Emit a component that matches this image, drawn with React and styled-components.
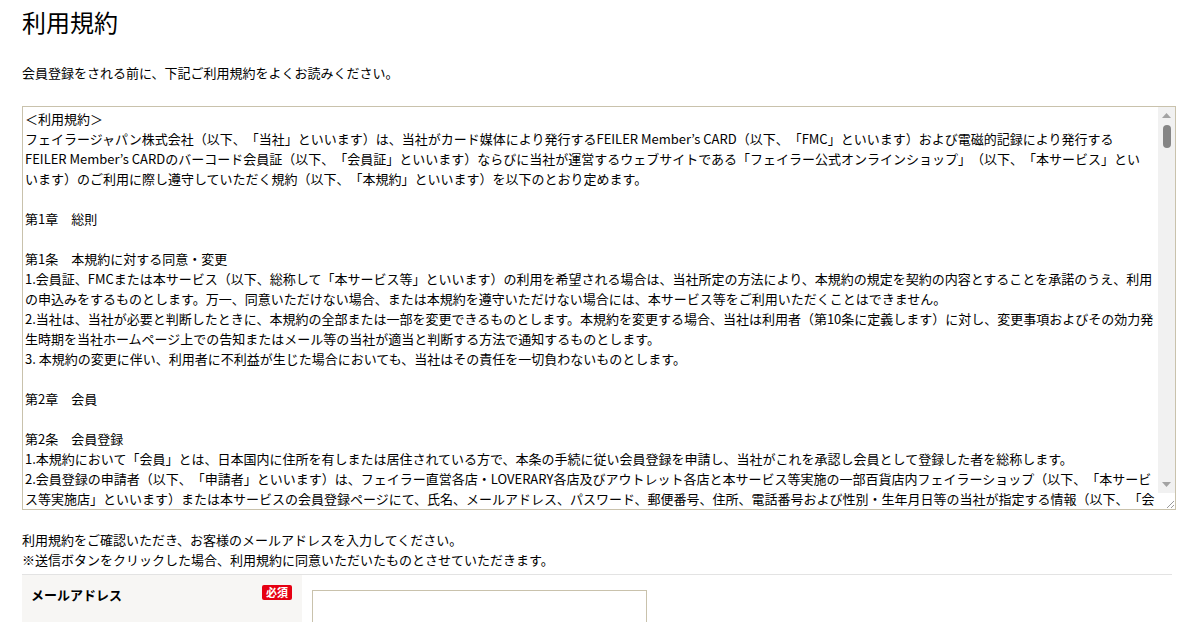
import React from 'react'
import styled, { createGlobalStyle } from 'styled-components'

const GlobalStyle = createGlobalStyle`
  body {
    margin: 0;
    background: #fff;
    color: #000;
    font-family: "Noto Sans CJK JP", "Noto Sans", sans-serif;
    text-spacing-trim: space-all;
  }
`

const Page = styled.div`
  padding: 0 13px 0 22px;
`

const Title = styled.h1`
  margin: 0;
  font-size: 24px;
  font-weight: normal;
  line-height: 44px;
`

const Lead = styled.p`
  margin: 19px 0 23px;
  font-size: 13px;
  line-height: 20px;
`

// textarea と自前のスクロールバーを並べる枠
const TermsFrame = styled.div`
  display: flex;
  box-sizing: border-box;
  height: 404px;
  border: 1px solid #c9c2ac;
  background: #fff;
`

const TermsBox = styled.textarea`
  flex: 1;
  display: block;
  margin: 0;
  padding: 2px 2px;
  border: none;
  background: #fff;
  color: #000;
  font-family: "Noto Sans CJK JP", "Noto Sans", sans-serif;
  font-size: 13px;
  line-height: 20px;
  text-spacing-trim: space-all;
  resize: none;
  outline: none;
  overflow: hidden;
`

const ScrollRail = styled.div`
  display: flex;
  flex-direction: column;
  width: 17px;
  background: #f1f1f1;
`

const RailButton = styled.div`
  display: flex;
  align-items: center;
  justify-content: center;
  height: 17px;
  color: #a3a3a3;
`

const RailTrack = styled.div`
  flex: 1;
  display: flex;
  justify-content: center;
  padding-top: 1px;
`

const RailThumb = styled.div`
  width: 8px;
  height: 23px;
  border-radius: 4px;
  background: #858585;
`

const Resizer = styled.div`
  display: flex;
  align-items: flex-end;
  justify-content: flex-end;
  height: 16px;
  background: #fff;
`

const Note = styled.p`
  margin: 20px 0 0;
  font-size: 13px;
  line-height: 20px;
`

const FormTable = styled.div`
  margin-top: 4px;
  border-top: 1px solid #e3e3e3;
  width: 1150px;
`

const FormRow = styled.div`
  display: grid;
  grid-template-columns: 280px 1fr;
`

const LabelCell = styled.div`
  display: flex;
  justify-content: space-between;
  align-items: flex-start;
  padding: 10px 10px 20px 9px;
  background: #f7f6f4;
`

const LabelText = styled.span`
  font-size: 13px;
  font-weight: bold;
  line-height: 20px;
`

const Required = styled.span`
  padding: 0 4px;
  border-radius: 2px;
  background: #e60012;
  color: #fff;
  font-size: 11px;
  font-weight: bold;
  line-height: 15px;
`

const InputCell = styled.div`
  padding: 15px 10px;
`

const TextInput = styled.input`
  display: block;
  box-sizing: border-box;
  width: 335px;
  height: 36px;
  padding: 4px 6px;
  border: 1px solid #c9c2ac;
  font-size: 13px;
  font-family: "Noto Sans CJK JP", "Noto Sans", sans-serif;
  outline: none;
`

const terms = `＜利用規約＞
フェイラージャパン株式会社（以下、「当社」といいます）は、当社がカード媒体により発行するFEILER Member’s CARD（以下、「FMC」といいます）および電磁的記録により発行する
FEILER Member’s CARDのバーコード会員証（以下、「会員証」といいます）ならびに当社が運営するウェブサイトである「フェイラー公式オンラインショップ」（以下、「本サービス」とい
います）のご利用に際し遵守していただく規約（以下、「本規約」といいます）を以下のとおり定めます。

第1章　総則

第1条　本規約に対する同意・変更
1.会員証、FMCまたは本サービス（以下、総称して「本サービス等」といいます）の利用を希望される場合は、当社所定の方法により、本規約の規定を契約の内容とすることを承諾のうえ、利用
の申込みをするものとします。万一、同意いただけない場合、または本規約を遵守いただけない場合には、本サービス等をご利用いただくことはできません。
2.当社は、当社が必要と判断したときに、本規約の全部または一部を変更できるものとします。本規約を変更する場合、当社は利用者（第10条に定義します）に対し、変更事項およびその効力発
生時期を当社ホームページ上での告知またはメール等の当社が適当と判断する方法で通知するものとします。
3. 本規約の変更に伴い、利用者に不利益が生じた場合においても、当社はその責任を一切負わないものとします。

第2章　会員

第2条　会員登録
1.本規約において「会員」とは、日本国内に住所を有しまたは居住されている方で、本条の手続に従い会員登録を申請し、当社がこれを承認し会員として登録した者を総称します。
2.会員登録の申請者（以下、「申請者」といいます）は、フェイラー直営各店・LOVERARY各店及びアウトレット各店と本サービス等実施の一部百貨店内フェイラーショップ（以下、「本サービ
ス等実施店」といいます）または本サービスの会員登録ページにて、氏名、メールアドレス、パスワード、郵便番号、住所、電話番号および性別・生年月日等の当社が指定する情報（以下、「会
員情報」といいます）を登録し、会員登録の申請を行うものとします。
3.当社は、申請者が以下の各号のいずれかに該当する場合には、会員登録を承認しないことがあります。
（1）申請者が実在しない場合
（2）会員情報に虚偽、誤記または記入漏れがあった場合
（3）申請者が過去に本規約に違反したことにより会員資格の取消等の処分を受けたことがある場合
（4）その他当社が会員として不適当と判断した場合
4.会員登録は、お一人様につき1つとします。

第3条　会員情報の変更
1.会員は、会員情報に変更が生じた場合、速やかに当社所定の方法により変更の手続を行うものとします。
2.前項の届出がなかったことにより会員が不利益を被った場合でも、当社は一切の責任を負わないものとします。

第4条　メールアドレスおよびパスワードの管理
1.会員は、自己のメールアドレスおよびパスワードを自己の責任において管理するものとし、第三者に使用させ、または貸与、譲渡、売買等をしてはならないものとします。
2.メールアドレスおよびパスワードの管理不十分、使用上の過誤、第三者の使用等による損害の責任は会員が負うものとし、当社は一切の責任を負わないものとします。

第5条　退会
1.会員が退会を希望する場合には、当社所定の方法により退会の手続を行うものとします。
2.退会した場合、保有するポイントその他の特典はすべて失効するものとします。

第6条　会員資格の取消
当社は、会員が以下の各号のいずれかに該当する場合、事前の通知なく会員資格を取り消すことができるものとします。
（1）本規約に違反した場合
（2）会員情報に虚偽の内容があることが判明した場合
（3）会員証またはFMCを不正に使用した場合
（4）その他当社が会員として不適当と判断した場合

第3章　ポイント

第7条　ポイントの付与
1.会員は、本サービス等実施店または本サービスにおいて商品を購入した場合、当社所定の基準によりポイントの付与を受けることができます。
2.ポイントの付与率、付与の対象となる商品その他の条件は、当社が別途定めるものとします。

第8条　ポイントの利用
1.会員は、保有するポイントを当社所定の方法により商品代金の一部または全部に充当することができます。
2.ポイントは現金に換金することはできません。

第9条　ポイントの有効期限
ポイントの有効期限は、当社が別途定めるものとします。有効期限を経過したポイントは自動的に失効するものとします。

附則
本規約は、当社が定める日から施行します。`

function App() {
  return (
    <Page>
      <GlobalStyle />
      <Title>利用規約</Title>
      <Lead>会員登録をされる前に、下記ご利用規約をよくお読みください。</Lead>
      <TermsFrame>
        <TermsBox readOnly value={terms} />
        <ScrollRail>
          <RailButton>
            <svg width="9" height="5" viewBox="0 0 9 5"><path d="M0 5 L4.5 0 L9 5 Z" fill="currentColor" /></svg>
          </RailButton>
          <RailTrack>
            <RailThumb />
          </RailTrack>
          <RailButton>
            <svg width="9" height="5" viewBox="0 0 9 5"><path d="M0 0 L9 0 L4.5 5 Z" fill="currentColor" /></svg>
          </RailButton>
          <Resizer>
            <svg width="12" height="12" viewBox="0 0 12 12">
              <path d="M11 4 L4 11 M11 8 L8 11" stroke="#9a9a9a" strokeWidth="1" />
            </svg>
          </Resizer>
        </ScrollRail>
      </TermsFrame>
      <Note>
        利用規約をご確認いただき、お客様のメールアドレスを入力してください。
        <br />
        ※送信ボタンをクリックした場合、利用規約に同意いただいたものとさせていただきます。
      </Note>
      <FormTable>
        <FormRow>
          <LabelCell>
            <LabelText>メールアドレス</LabelText>
            <Required>必須</Required>
          </LabelCell>
          <InputCell>
            <TextInput type="email" />
          </InputCell>
        </FormRow>
      </FormTable>
    </Page>
  )
}

export default App
